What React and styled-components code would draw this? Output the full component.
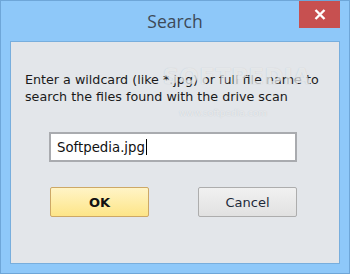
import React from 'react';
import styled, { createGlobalStyle } from 'styled-components';

const GlobalStyle = createGlobalStyle`
  html, body {
    margin: 0;
    padding: 0;
    background: #8ec8f9;
  }
  * {
    box-sizing: border-box;
  }
`;

const Window = styled.div`
  width: 350px;
  height: 274px;
  display: flex;
  flex-direction: column;
  background: #8ec8f9;
  border: 1px solid #6ea6d8;
  font-family: 'DejaVu Sans', Tahoma, sans-serif;
`;

const TitleBar = styled.div`
  height: 40px;
  display: grid;
  grid-template-columns: 1fr auto 1fr;
  align-items: start;
`;

const Title = styled.div`
  grid-column: 2;
  padding-top: 8px;
  font-family: 'Open Sans', 'Noto Sans', sans-serif;
  font-size: 17.5px;
  color: #3d4a58;
  line-height: 24px;
`;

const CloseButton = styled.div`
  grid-column: 3;
  justify-self: end;
  width: 41px;
  height: 27px;
  margin-right: 9px;
  background: #c75050;
  display: flex;
  align-items: center;
  justify-content: center;
`;

const Client = styled.div`
  position: relative;
  flex: 1;
  margin: 0 9px 9px 9px;
  background: #e3e6ea;
  border: 1px solid #78aedd;
  padding: 29px 0 0 14px;
  display: flex;
  flex-direction: column;
`;

const Prompt = styled.div`
  font-size: 12.7px;
  line-height: 17px;
  color: #1a1a1a;
  white-space: nowrap;
`;

const Watermark = styled.div`
  position: absolute;
  left: ${p => p.left}px;
  top: ${p => p.top}px;
  font-family: 'DejaVu Sans', sans-serif;
  font-size: ${p => p.size}px;
  font-weight: ${p => (p.bold ? 700 : 400)};
  color: rgba(255, 255, 255, 0.6);
  text-shadow: 0 0 1px rgba(140, 150, 160, 0.45);
  pointer-events: none;
  letter-spacing: ${p => p.spacing || 0}px;
`;

const TextBox = styled.div`
  margin: 27px 0 0 24px;
  width: 248px;
  height: 30px;
  background: #ffffff;
  border: 2px solid #a9abaf;
  display: flex;
  align-items: center;
  padding-left: 6px;
  font-size: 13.3px;
  color: #111;
`;

const Caret = styled.span`
  display: inline-block;
  width: 1px;
  height: 16px;
  background: #000;
  margin-left: 1px;
`;

const ButtonRow = styled.div`
  margin: 25px 0 0 25px;
  display: flex;
  gap: 49px;
`;

const Button = styled.div`
  width: 99px;
  height: 30px;
  display: flex;
  align-items: center;
  justify-content: center;
  border-radius: 2px;
  font-size: 13px;
  font-weight: ${p => (p.$primary ? 700 : 400)};
  color: ${p => (p.$primary ? '#111' : '#1e2a3a')};
  border: 1px solid ${p => (p.$primary ? '#cda866' : '#adadad')};
  background: ${p =>
    p.$primary
      ? 'linear-gradient(#fff4c6, #fde588)'
      : 'linear-gradient(#f1f1f1, #e1e1e1)'};
`;

export default function App() {
  return (
    <>
      <GlobalStyle />
      <Window>
        <TitleBar>
          <Title>Search</Title>
          <CloseButton>
            <svg width="12" height="11" viewBox="0 0 12 11">
              <path d="M1.5 1 L10.5 10 M10.5 1 L1.5 10" stroke="#fff" strokeWidth="2.4" />
            </svg>
          </CloseButton>
        </TitleBar>
        <Client>
          <Prompt>
            Enter a wildcard (like *.jpg) or full file name to
            <br />
            search the files found with the drive scan
          </Prompt>
          <Watermark left={152} top={22} size={22} bold spacing={1}>SOFTPEDIA</Watermark>
          <Watermark left={168} top={66} size={9}>www.softpedia.com</Watermark>
          <TextBox>
            Softpedia.jpg
            <Caret />
          </TextBox>
          <ButtonRow>
            <Button $primary>OK</Button>
            <Button>Cancel</Button>
          </ButtonRow>
        </Client>
      </Window>
    </>
  );
}
